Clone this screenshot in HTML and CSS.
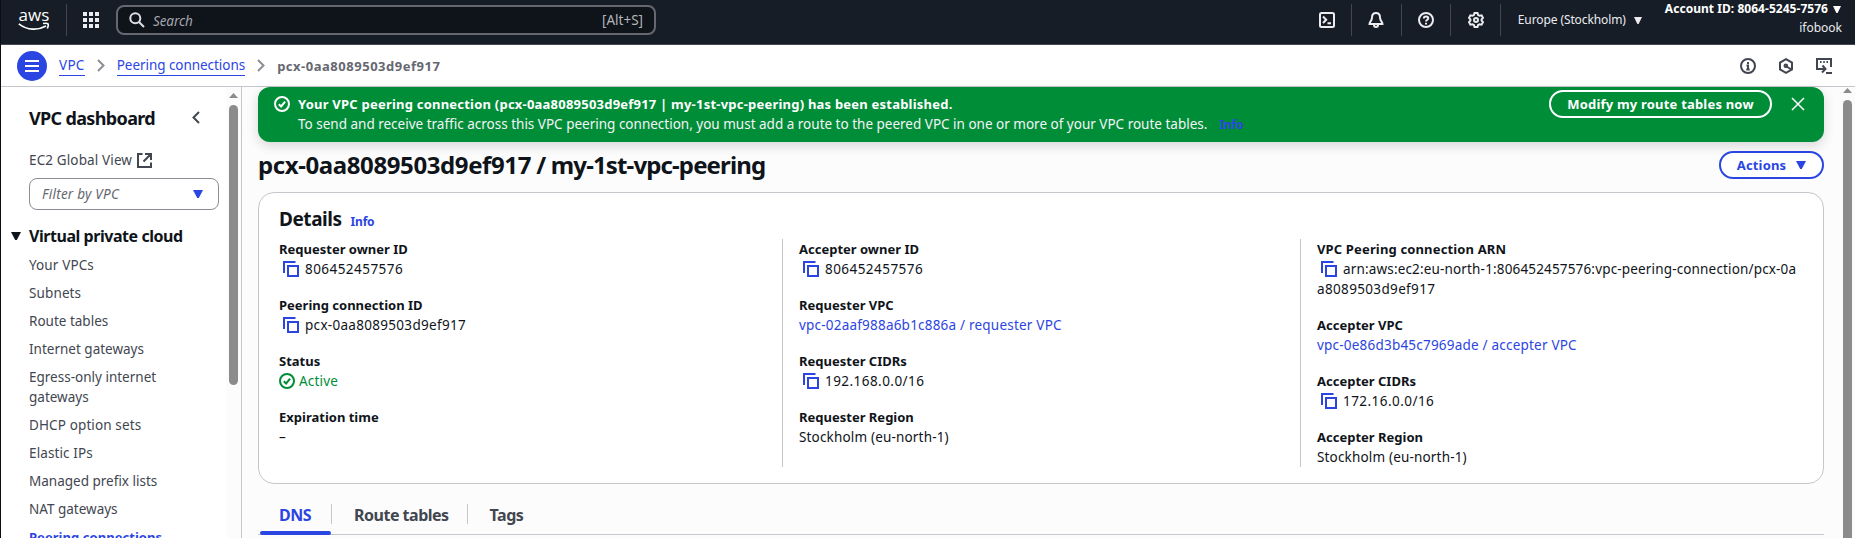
FILE: index.html
```html
<!DOCTYPE html>
<html lang="en">
<head>
<meta charset="utf-8">
<title>VPC peering connection</title>
<link rel="stylesheet" href="styles.css">
</head>
<body>
<svg class="defs" width="0" height="0">
  <symbol id="copy" viewBox="0 0 16 16"><path d="M1 12V1h11.5" /><path d="M5 5h10v10H5z"/></symbol>
  <symbol id="ok" viewBox="0 0 16 16"><circle cx="8" cy="8" r="7"/><path d="m4.8 8.3 2.3 2.2 4-4.8"/></symbol>
  <symbol id="caret" viewBox="0 0 10 8"><path d="M0 0h10L5.8 8H4.2z"/></symbol>
</svg>
<div class="page">
<header class="top">
  <a class="logo"><span>aws</span><svg width="32" height="9" viewBox="0 0 32 9"><path d="M.8 1.8C9.500 8.500 20 8.500 28 4" /><path d="M25 1.500c5.300-.8 6.500 0 4.300 5" /></svg></a>
  <i class="sep"></i>
  <svg class="apps" width="16" height="16" viewBox="0 0 16 16"><path d="M0 0h4v4H0zM6 0h4v4H6zM12 0h4v4h-4zM0 6h4v4H0zM6 6h4v4H6zM12 6h4v4h-4zM0 12h4v4H0zM6 12h4v4H6zM12 12h4v4h-4z"/></svg>
  <div class="search">
    <svg class="ico" width="16" height="16" viewBox="0 0 16 16"><circle cx="6.300" cy="6.300" r="5"/><path d="m10 10 5 5"/></svg>
    <em>Search</em><span>[Alt+S]</span>
  </div>
  <div class="tools">
    <div class="tool"><svg class="ico" width="16" height="16" viewBox="0 0 16 16"><rect x="1" y="1" width="14" height="14" rx="1.500"/><path d="m4 4.500 3.200 3.200L4 11M8.500 11.300H12"/></svg></div>
    <div class="tool"><svg class="ico" width="16" height="16" viewBox="0 0 16 16"><path d="M8 1C5 1 4 3 4 5.500 4 9 1.500 9.500 1.500 12h13c0-2.500-2.500-3-2.500-6.500C12 3 11 1 8 1z"/><path d="M6 13c0 2.600 4 2.600 4 0"/></svg></div>
    <div class="tool"><svg class="ico" width="16" height="16" viewBox="0 0 16 16"><circle cx="8" cy="8" r="7"/><path d="M5.800 6.500C5.800 3.700 10.300 3.800 10.300 6.300 10.300 8 8 7.700 8 9.500M8 10.800v1.700"/></svg></div>
    <div class="tool"><svg class="ico" width="16" height="16" viewBox="0 0 16 16"><path d="M6.500 1h3l.6 2 1.500.8 2-.5L15 5.900 13.600 7.400v1.200L15 10.100l-1.400 2.600-2-.5-1.500.8-.6 2h-3l-.6-2-1.500-.8-2 .5L1 10.100l1.400-1.500V7.400L1 5.900l1.400-2.600 2 .5L5.900 3z"/><circle cx="8" cy="8" r="2"/></svg></div>
    <div class="region">Europe (Stockholm)<svg class="tri" width="8" height="7" viewBox="0 0 10 8" preserveAspectRatio="none"><use href="#caret"/></svg></div>
    <div class="account"><b>Account ID: 8064-5245-7576<svg class="tri" width="8" height="7" viewBox="0 0 10 8" preserveAspectRatio="none"><use href="#caret"/></svg></b><span>ifobook</span></div>
  </div>
</header>

<nav class="crumbs">
  <div class="burger"><i></i><i></i><i></i></div>
  <a class="c1">VPC</a>
  <svg class="chev" width="8" height="13" viewBox="0 0 8 13"><path d="m1 1 5.500 5.500L1 12"/></svg>
  <a class="c2">Peering connections</a>
  <svg class="chev" width="8" height="13" viewBox="0 0 8 13"><path d="m1 1 5.500 5.500L1 12"/></svg>
  <b>pcx-0aa8089503d9ef917</b>
  <div class="crumbtools">
    <svg class="ico" width="16" height="16" viewBox="0 0 16 16"><circle cx="8" cy="8" r="7"/><path d="M8 4v2M6.500 7.500H8V12M6.300 11.500h3.400"/></svg>
    <svg class="ico" width="16" height="16" viewBox="0 0 16 16"><path d="m8 1.200 6 3.400v6.800l-6 3.400-6-3.400V4.600z"/><circle cx="7.800" cy="7.800" r="1.300"/><path d="m8.500 8.500 5 3"/></svg>
    <svg class="ico" width="16" height="16" viewBox="0 0 16 16"><path d="M5 11H1V1h14v8M4 4h1.500M7.300 4h1.500M10.500 4H12M10 15h6M4 11h5M6.500 7.500 9.500 11 6 14.500"/></svg>
  </div>
</nav>

<div class="body">
  <aside class="side">
    <div class="nav">
      <div class="navhead"><h2>VPC dashboard</h2><svg width="8" height="13" viewBox="0 0 8 13"><path d="M7 1 1.500 6.500 7 12"/></svg></div>
      <div class="global">EC2 Global View<svg width="15" height="15" viewBox="0 0 15 15"><path d="M5.500 1H1v13h13V9.500M8 1h6v6M14 1 6.500 8.500"/></svg></div>
      <div class="select"><em>Filter by VPC</em><svg class="tri" width="10" height="8"><use href="#caret"/></svg></div>
      <h3><svg class="tri" width="10" height="8"><use href="#caret"/></svg>Virtual private cloud</h3>
      <ul>
        <li class="sp">Your VPCs</li><li class="sp">Subnets</li><li>Route tables</li><li>Internet gateways</li>
        <li>Egress-only internet<br>gateways</li><li class="sp">DHCP option sets</li><li class="sp">Elastic IPs</li>
        <li>Managed prefix lists</li><li>NAT gateways</li><li class="on">Peering connections</li>
      </ul>
    </div>
    <div class="bar sbar"><svg width="9" height="5" viewBox="0 0 9 5"><path d="M4.500 0 9 5H0z"/></svg><i></i></div>
  </aside>

  <main>
    <section class="flash">
      <svg class="ico" width="16" height="16"><use href="#ok"/></svg>
      <div class="msg"><b>Your VPC peering connection (pcx-0aa8089503d9ef917 | my-1st-vpc-peering) has been established.</b>
        <p>To send and receive traffic across this VPC peering connection, you must add a route to the peered VPC in one or more of your VPC route tables.<span class="info">Info</span></p></div>
      <button class="modify">Modify my route tables now</button>
      <svg class="close" width="14" height="14" viewBox="0 0 14 14"><path d="m1 1 12 12M13 1 1 13"/></svg>
    </section>
    <div class="titlerow"><h1><span>pcx-0aa8089503d9ef917</span> / my-1st-vpc-peering</h1><button class="actions">Actions<svg class="tri" width="10" height="8"><use href="#caret"/></svg></button></div>
    <section class="card">
      <div class="cardhead"><h2>Details</h2><span class="info">Info</span></div>
      <div class="cols">
        <dl>
          <div><dt>Requester owner ID</dt><dd class="id"><svg class="copy" width="16" height="16"><use href="#copy"/></svg>806452457576</dd></div>
          <div><dt>Peering connection ID</dt><dd class="pc"><svg class="copy" width="16" height="16"><use href="#copy"/></svg>pcx-0aa8089503d9ef917</dd></div>
          <div><dt>Status</dt><dd class="ok"><svg class="ico" width="16" height="16"><use href="#ok"/></svg>Active</dd></div>
          <div><dt>Expiration time</dt><dd>–</dd></div>
        </dl>
        <dl>
          <div><dt>Accepter owner ID</dt><dd class="id"><svg class="copy" width="16" height="16"><use href="#copy"/></svg>806452457576</dd></div>
          <div><dt>Requester VPC</dt><dd class="link">vpc-02aaf988a6b1c886a / requester VPC</dd></div>
          <div><dt>Requester CIDRs</dt><dd class="id"><svg class="copy" width="16" height="16"><use href="#copy"/></svg>192.168.0.0/16</dd></div>
          <div><dt>Requester Region</dt><dd>Stockholm (eu-north-1)</dd></div>
        </dl>
        <dl>
          <div><dt class="wide">VPC Peering connection ARN</dt><dd class="arn"><svg class="copy" width="16" height="16"><use href="#copy"/></svg>arn:aws:ec2:eu-north-1:806452457576:vpc-peering-connection/pcx-0a<br><span class="rest">a8089503d9ef917</span></dd></div>
          <div><dt>Accepter VPC</dt><dd class="link">vpc-0e86d3b45c7969ade / accepter VPC</dd></div>
          <div><dt>Accepter CIDRs</dt><dd class="id"><svg class="copy" width="16" height="16"><use href="#copy"/></svg>172.16.0.0/16</dd></div>
          <div><dt>Accepter Region</dt><dd>Stockholm (eu-north-1)</dd></div>
        </dl>
      </div>
    </section>
    <div class="tabs"><div class="tab on">DNS</div><div class="tab">Route tables</div><div class="tab">Tags</div></div>
  </main>
  <div class="bar mbar"><svg width="9" height="5" viewBox="0 0 9 5"><path d="M4.500 0 9 5H0z"/></svg><i></i></div>
</div>
</div>
</body>
</html>
```
FILE: styles.css
```css
*{box-sizing:border-box;margin:0;padding:0}
body{font:13.5px/20px "Noto Sans","Open Sans",sans-serif;color:#0f141a;background:#fff;overflow:hidden}
svg{display:block;flex:none;fill:none;stroke:currentColor}
.defs{position:absolute}
.ico{stroke-width:2}
.tri{fill:currentColor;stroke:none}
.page{height:538px;border-left:1px solid #0c0d10;display:flex;flex-direction:column;overflow:hidden;white-space:nowrap}
button{font:700 13px/20px "Noto Sans",sans-serif;background:none}

.top{height:45px;flex:none;background:#161d26;border-bottom:1px solid #424650;display:flex;align-items:flex-start;padding-left:17px;color:#ebebf0}
.logo{width:32px;padding-top:6px;color:#fff}
.logo span{display:block;font:500 17px/17px "Open Sans",sans-serif;letter-spacing:.1px;text-align:center;height:16px}
.logo svg{stroke-width:1.600}
.sep{width:1px;height:32px;margin:4px 16px 0 16px;background:#424650}
.apps{margin-top:12px;fill:currentColor;stroke:none}
.search{width:540px;height:30px;margin:5px 0 0 17px;border:2px solid #656871;border-radius:8px;background:#0f141a;display:flex;align-items:center;padding:0 11px 0 11px;color:#b4b4bb}
.search .ico{color:#dedee3}
.search em{margin-left:8px;flex:1;letter-spacing:-.1px;padding-top:2px;color:#a4a4ad}
.tools{margin-left:auto;display:flex;font-size:12px;padding-right:13px}
.tool{height:32px;margin-top:4px;width:50px;padding:8px 0 0 16px;border-right:1px solid #424650}
.tool:nth-child(1){padding-left:17px}
.tool:nth-child(3){width:49px}
.tool:nth-child(4){padding-left:17px}
.region{display:flex;align-items:center;gap:8px;height:20px;margin:10px 23px 0 17px;letter-spacing:-.1px}
.account{display:flex;flex-direction:column;align-items:flex-end;color:#fff}
.account b{display:flex;align-items:center;gap:5px;line-height:18px;padding-right:1px;letter-spacing:.04px}
.account span{line-height:20px;color:#ebebf0}

.crumbs{height:42px;flex:none;border-bottom:1px solid #c6c6cd;display:flex;align-items:center;padding:0 22px 0 16px}
.burger{width:30px;height:30px;border-radius:50%;background:#2b45e2;display:flex;flex-direction:column;align-items:center;justify-content:center;gap:3px}
.burger i{width:14px;height:2px;background:#fff}
.crumbs a{line-height:19px;border-bottom:1px solid #2b45e2;color:#2b45e2;margin-top:1px}
.crumbs .c1{margin-left:12px;letter-spacing:.3px}
.crumbs .c2{letter-spacing:-.05px}
.chev{margin:0 12px;color:#8c8c94;stroke-width:2}
.crumbs b{font-size:13px;letter-spacing:.52px;color:#656871}
.crumbtools{margin-left:auto;display:flex;gap:22px;color:#424650;padding-right:1px}

.body{flex:1;min-height:0;display:flex}
.side{width:241px;flex:none;border-right:1px solid #c6c6cd;display:flex}
.nav{width:225px;padding:18px 0 0 28px;color:#424650}
.navhead{display:flex;align-items:center;height:26px}
.navhead h2{font:700 18px/26px "Noto Sans",sans-serif;letter-spacing:-.65px;width:163px;color:#0f141a}
.navhead svg{stroke-width:2;margin-top:-2px}
.global{display:flex;gap:5px;align-items:center;margin-top:19px;letter-spacing:.13px}
.global svg{stroke-width:2}
.select{margin-top:8px;width:190px;height:32px;border:1px solid #8c8c94;border-radius:8px;display:flex;align-items:center;justify-content:space-between;padding:0 15px 0 12px;color:#656871}
.select em{letter-spacing:.25px}
.select .tri{color:#2b45e2}
.nav h3{font:700 16px/20px "Noto Sans",sans-serif;letter-spacing:-.45px;display:flex;align-items:center;gap:8px;margin:16px 0 0 -18px;color:#0f141a}
.nav ul{list-style:none;margin-top:9px;display:grid;gap:8px}
.nav .sp{letter-spacing:.12px}
.nav .on{font-weight:700;font-size:13px;color:#2b45e2;letter-spacing:.05px}
.bar{background:#fcfcfc;display:flex;flex-direction:column;align-items:center;flex:none}
.bar svg{fill:#8b8b8b;stroke:none}
.bar i{width:9px;border-radius:5px;background:#8b8b8b}
.sbar{width:15px;padding-top:6px}
.sbar i{height:280px;margin-top:7px}
.mbar{width:15px;padding-top:1px}
.mbar i{flex:1;margin-top:7px;border-radius:5px 5px 0 0}

main{flex:1;min-width:0;background:#fcfcfc;padding:0 16px}
.flash{height:55px;background:#008d38;border-radius:12px;color:#fff;display:flex;padding:0 19px 0 16px;box-shadow:0 4px 12px rgba(0,7,22,.15)}
.flash>.ico{margin-top:9px}
.msg{flex:1;padding:7px 0 0 8px}
.msg b{font-size:13px;letter-spacing:.22px}
.msg p{color:#f3f3f7}
.info{font-weight:700;font-size:12px;color:#2b45e2;letter-spacing:-.2px}
.msg .info{margin-left:12px}
.modify{width:223px;height:28px;margin:3px 19px 0 0;border:2px solid #fff;border-radius:14px;color:#fff;letter-spacing:.2px}
.close{margin-top:10px;stroke-width:1.500}
.titlerow{height:50px;display:flex;justify-content:space-between;padding-top:9px}
h1{font:700 24px/30px "Noto Sans",sans-serif;letter-spacing:-.87px;margin-top:-1px}
h1 span{letter-spacing:-.4px}
.actions{width:105px;height:28px;border:2px solid #2b45e2;border-radius:14px;background:#fff;color:#2b45e2;display:flex;align-items:center;justify-content:center;gap:10px;letter-spacing:.15px}
.card{height:292px;border:1px solid #c6c6cd;border-radius:16px;background:#fff;padding:14px 20px}
.cardhead{display:flex;align-items:baseline;gap:9px;height:32px}
.cardhead h2{font:700 19px/24px "Noto Sans",sans-serif;letter-spacing:-.45px}
.cols{display:grid;grid-template-columns:503px 518px 1fr}
dl{display:flex;flex-direction:column;gap:16px}
dl+dl{border-left:1px solid #c6c6cd;padding-left:16px}
dt{font-weight:700;font-size:13px}
dt.wide{letter-spacing:.15px}
dd{letter-spacing:.17px}
dd svg{display:inline-block;vertical-align:-3px}
dd .copy{color:#2b45e2;stroke-width:2;margin:0 6px 0 4px}
.id{letter-spacing:.45px}
.pc{letter-spacing:.3px}
.arn{letter-spacing:.16px}
.rest{letter-spacing:.35px}
.ok{color:#008d38}
.ok svg{margin-right:4px}
.link{color:#2b45e2;letter-spacing:.21px}
.tabs{display:flex;height:51px;border-bottom:1px solid #c6c6cd;align-items:flex-end}
.tab{position:relative;height:46px;padding:17px 20px 0 22px;font:700 16px/20px "Noto Sans",sans-serif;letter-spacing:-.5px;color:#424650}
.tab.on{color:#2b45e2;padding:17px 21px 0 21px}
.tab:nth-child(2){padding-right:19px}
.tab:not(:last-child)::before{content:"";position:absolute;right:0;top:16px;width:1px;height:20px;background:#c6c6cd}
.tab.on::after{content:"";position:absolute;left:2px;right:1px;bottom:-1px;height:4px;border-radius:2px;background:#2b45e2}
```
